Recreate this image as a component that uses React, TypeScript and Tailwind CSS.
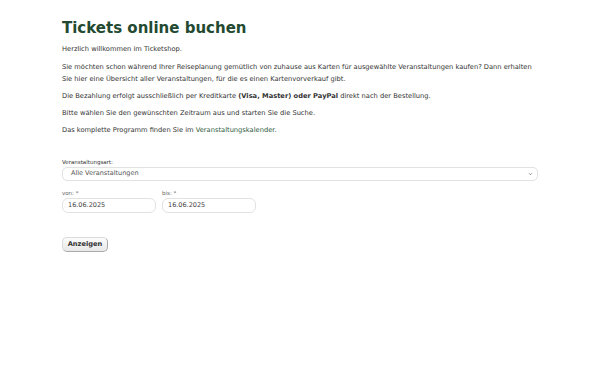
import React from "react";

const font = { fontFamily: '"DejaVu Sans", sans-serif' };

export default function App() {
  return (
    <div className="min-h-screen bg-white text-[#333]" style={font}>
      <div className="ml-[62px] w-[476px] pt-[19px]">
        {/* Header */}
        <h1 className="text-[15px] font-bold leading-[18px] text-[#234a31]">
          Tickets online buchen
        </h1>

        {/* Intro text */}
        <div className="mt-[6px] space-y-[5px] text-[6.7px] leading-[12px]">
          <p className="pb-[1px]">Herzlich willkommen im Ticketshop.</p>
          <p>
            Sie möchten schon während Ihrer Reiseplanung gemütlich von zuhause
            aus Karten für ausgewählte Veranstaltungen kaufen? Dann erhalten Sie
            hier eine Übersicht aller Veranstaltungen, für die es einen
            Kartenvorverkauf gibt.
          </p>
          <p>
            Die Bezahlung erfolgt ausschließlich per Kreditkarte{" "}
            <b>(Visa, Master) oder PayPal</b> direkt nach der Bestellung.
          </p>
          <p>Bitte wählen Sie den gewünschten Zeitraum aus und starten Sie die Suche.</p>
          <p>
            Das komplette Programm finden Sie im{" "}
            <a href="#" className="text-[#2f5b3d]">
              Veranstaltungskalender
            </a>
            .
          </p>
        </div>

        {/* Search form */}
        <form className="mt-[23px]" onSubmit={(e) => e.preventDefault()}>
          <label className="block text-[5.5px] leading-[7px] text-[#333]">
            Veranstaltungsart:
          </label>
          <div className="relative mt-[1px] flex h-[14px] items-center rounded-[5px] border border-[#e2e2e2] bg-white pl-[8px] text-[6.5px] text-[#555]">
            Alle Veranstaltungen
            <svg
              viewBox="0 0 10 10"
              className="absolute right-[4px] top-1/2 h-[5px] w-[5px] -translate-y-1/2"
            >
              <path d="M2 3.5 L5 6.5 L8 3.5" fill="none" stroke="#666" strokeWidth="1.4" />
            </svg>
          </div>

          <div className="mt-[9px] flex gap-[6px]">
            {["von: *", "bis: *"].map((l) => (
              <div key={l} className="w-[94px]">
                <label className="block text-[5.5px] leading-[7px] text-[#666]">{l}</label>
                <div className="mt-[1px] flex h-[15px] items-center rounded-[6px] border border-[#e2e2e2] pl-[5px] text-[6.5px] text-[#444]">
                  16.06.2025
                </div>
              </div>
            ))}
          </div>

          <button
            type="submit"
            className="mt-[24px] h-[15px] w-[46px] rounded-[5px] border border-[#dadada] border-b-[#aaa] border-r-[#aaa] bg-gradient-to-b from-[#fcfcfc] to-[#e8e8e8] text-[6.7px] font-bold leading-none text-[#333]"
          >
            Anzeigen
          </button>
        </form>
      </div>
    </div>
  );
}
